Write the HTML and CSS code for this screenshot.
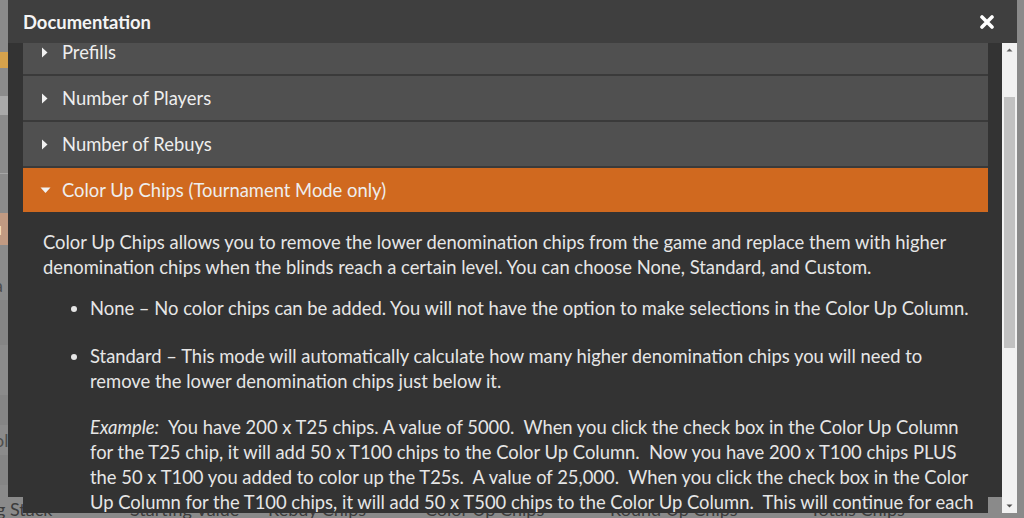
FILE: index.html
```html
<!DOCTYPE html>
<html>
<head>
<meta charset="utf-8">
<link rel="stylesheet" href="styles.css">
</head>
<body>
<div class="page">
  <div class="bg-left">
    <div class="bg-cell h12"></div>
    <div class="bg-cell h16 amber"></div>
    <div class="bg-cell h28"></div>
    <div class="bg-cell h19 light"></div>
    <div class="bg-cell h58"></div>
    <div class="bg-cell h40 line"></div>
    <div class="bg-cell h32 salmon"><span>u</span></div>
    <div class="bg-cell h25"></div>
    <div class="bg-cell h30"><span class="dim">a</span></div>
    <div class="bg-cell h45 shade"></div>
    <div class="bg-cell h50"></div>
    <div class="bg-cell h30 shade"></div>
    <div class="bg-cell h30"><span class="dim">ol</span></div>
    <div class="bg-cell h30 shade"></div>
  </div>
  <div class="bg-foot">
    <span class="c1">g Stack</span>
    <span class="c2">Starting Value</span>
    <span class="c3">Rebuy Chips</span>
    <span class="c4">Color Up Chips</span>
    <span class="c5">Round Up Chips</span>
    <span class="c6">Totals Chips</span>
  </div>

  <div class="modal">
    <div class="modal-header">
      <span class="modal-title">Documentation</span>
      <svg class="close" width="14" height="14" viewBox="0 0 14 14"><path d="M2 2 L12 12 M12 2 L2 12" stroke="#fff" stroke-width="3.6" stroke-linecap="round"/></svg>
    </div>
    <div class="modal-body">
      <div class="body-wrap">
        <div class="viewport">
          <div class="scroller">
            <div class="acc-row"><svg class="caret" width="8" height="11" viewBox="0 0 8 11"><path d="M1 0.5 L6.5 5.5 L1 10.5Z" fill="#f2f2f2"/></svg><span>Prefills</span></div>
            <div class="acc-row"><svg class="caret" width="8" height="11" viewBox="0 0 8 11"><path d="M1 0.5 L6.5 5.5 L1 10.5Z" fill="#f2f2f2"/></svg><span>Number of Players</span></div>
            <div class="acc-row"><svg class="caret" width="8" height="11" viewBox="0 0 8 11"><path d="M1 0.5 L6.5 5.5 L1 10.5Z" fill="#f2f2f2"/></svg><span>Number of Rebuys</span></div>
            <div class="acc-row open"><svg class="caret down" width="11" height="8" viewBox="0 0 11 8"><path d="M0.5 1.5 L10.5 1.5 L5.5 7Z" fill="#f2f2f2"/></svg><span>Color Up Chips (Tournament Mode only)</span></div>
            <div class="acc-content">
              <p class="intro">Color Up Chips allows you to remove the lower denomination chips from the game and replace them with higher denomination chips when the blinds reach a certain level. You can choose None, Standard, and Custom.</p>
              <ul>
                <li class="li-none">None – No color chips can be added. You will not have the option to make selections in the Color Up Column.</li>
                <li>Standard – This mode will automatically calculate how many higher denomination chips you will need to remove the lower denomination chips just below it.
                  <p class="example"><em>Example:</em>&nbsp; You have 200 x T25 chips. A value of 5000.&nbsp; When you click the check box in the Color Up Column for the T25 chip, it will add 50 x T100 chips to the Color Up Column.&nbsp; Now you have 200 x T100 chips PLUS the 50 x T100 you added to color up the T25s.&nbsp; A value of 25,000.&nbsp; When you click the check box in the Color Up Column for the T100 chips, it will add 50 x T500 chips to the Color Up Column.&nbsp; This will continue for each denomination you select.</p>
                </li>
              </ul>
            </div>
          </div>
        </div>
      </div>
      <div class="scrollbar">
        <svg class="sb-arrow" width="15" height="14" viewBox="0 0 15 14"><path d="M4.5 8.5 L10.5 8.5 L7.5 5.5Z" fill="#606060"/></svg>
        <div class="sb-track"><div class="sb-thumb"></div></div>
        <svg class="sb-arrow" width="15" height="14" viewBox="0 0 15 14"><path d="M4.5 5.5 L10.5 5.5 L7.5 8.5Z" fill="#505050"/></svg>
      </div>
    </div>
  </div>
</div>
</body>
</html>
```

FILE: styles.css
```css
* { box-sizing: border-box; }
html, body { margin: 0; padding: 0; }
body {
  width: 1024px;
  height: 518px;
  overflow: hidden;
  background: #8a8a8a;
  font-family: Lato, "Open Sans", sans-serif;
}
.page {
  position: relative;
  width: 1024px;
  height: 518px;
  overflow: hidden;
}
.bg-left {
  display: flex;
  flex-direction: column;
  width: 30px;
  padding-top: 40px;
}
.bg-cell { background: #8b8b8b; overflow: hidden; font-size: 18px; line-height: 30px; color: #3a3a3a; }
.bg-cell span { display: block; margin-left: -8px; }
.bg-cell .dim { margin-left: -6px; color: #4e4e4e; }
.h12 { height: 12px; }
.h16 { height: 16px; }
.h19 { height: 19px; }
.h25 { height: 25px; }
.h28 { height: 28px; }
.h30 { height: 30px; }
.h32 { height: 32px; }
.h40 { height: 40px; }
.h45 { height: 45px; }
.h50 { height: 50px; }
.h58 { height: 58px; }
.amber { background: #d6a24c; }
.light { background: #a9a9a9; }
.line { border-top: 1px solid #a5a5a5; }
.salmon { background: #c19a82; color: #f3e8e0; }
.shade { background: #858585; }

.bg-foot {
  position: absolute;
  left: 0;
  top: 499px;
  width: 1024px;
  height: 19px;
  font-size: 18px;
  color: #3c3c3c;
  line-height: 20px;
  white-space: nowrap;
}
.bg-foot span { position: absolute; top: 0; }
.bg-foot .c1 { left: -4px; }
.bg-foot .c2 { left: 130px; }
.bg-foot .c3 { left: 268px; }
.bg-foot .c4 { left: 425px; }
.bg-foot .c5 { left: 610px; }
.bg-foot .c6 { left: 810px; }

.modal {
  position: absolute;
  left: 8px;
  top: 0;
  width: 1009px;
  display: flex;
  flex-direction: column;
}
.modal-header {
  height: 43px;
  background: #3f3f3f;
  display: flex;
  align-items: center;
  justify-content: space-between;
  padding: 0 23px 0 15px;
}
.modal-title {
  color: #f4f4f4;
  font-weight: 700;
  font-size: 18.4px;
}
.close { display: block; margin-top: 0; }

.modal-body {
  display: flex;
  align-items: flex-start;
}
.body-wrap {
  flex: 1;
  height: 454px;
  background: #333333;
  padding: 0 14px 0 15px;
}
.viewport {
  height: 470px;
  overflow: hidden;
  background: #333333;
}
.scroller { margin-top: -13px; }
.acc-row {
  height: 46px;
  background: #505050;
  border-bottom: 2px solid #3a3a3a;
  display: flex;
  align-items: center;
  color: #eeeeee;
  font-size: 18.4px;
  padding-left: 18px;
}
.acc-row .caret { margin-right: 13px; }
.acc-row .caret.down { margin-left: -1px; margin-right: 11px; }
.acc-row.open {
  background: #d0691f;
  border-bottom: 0;
  height: 44px;
}
.acc-content {
  padding: 18px 10px 0 20px;
  color: #e6e6e6;
  font-size: 18.4px;
  line-height: 25px;
}
.acc-content p { margin: 0; }
.intro { margin-bottom: 16px !important; }
.acc-content ul {
  margin: 0;
  padding-left: 47px;
}
.acc-content li { margin: 0; }
.li-none { margin-bottom: 23px !important; }
.example { margin-top: 21px !important; }

.scrollbar {
  width: 15px;
  height: 470px;
  background: #f1f1f1;
  display: flex;
  flex-direction: column;
}
.sb-arrow { display: block; flex: none; }
.sb-track { flex: 1; padding: 40px 2px 0 2px; }
.sb-thumb { height: 251px; background: #c1c1c1; }
```
